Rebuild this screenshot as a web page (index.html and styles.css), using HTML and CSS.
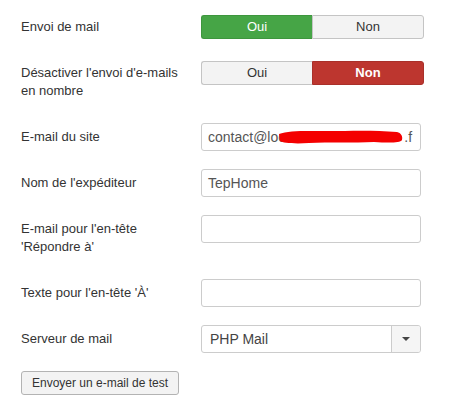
FILE: index.html
```html
<!DOCTYPE html>
<html lang="fr">
<head>
<meta charset="utf-8">
<link rel="stylesheet" href="styles.css">
</head>
<body>
<form class="form">
  <div class="row">
    <div class="label">Envoi de mail</div>
    <div class="controls">
      <div class="toggle">
        <span class="opt on-yes">Oui</span>
        <span class="opt">Non</span>
      </div>
    </div>
  </div>
  <div class="row">
    <div class="label">Désactiver l'envoi d'e-mails en nombre</div>
    <div class="controls">
      <div class="toggle">
        <span class="opt">Oui</span>
        <span class="opt on-no">Non</span>
      </div>
    </div>
  </div>
  <div class="row">
    <div class="label">E-mail du site</div>
    <div class="controls">
      <div class="input">
        <span class="val">contact@loc<svg class="scribble" width="124" height="16" viewBox="0 0 124 16"><path d="M0 5 C 10 1, 30 2, 50 2 C 70 2, 95 1, 118 3 C 122 4, 124 7, 123 11 C 121 14, 110 14, 95 13 C 75 14, 50 13, 30 14 C 15 15, 4 14, 1 12 Z" fill="#f40000"/></svg>.f</span>
      </div>
    </div>
  </div>
  <div class="row">
    <div class="label">Nom de l'expéditeur</div>
    <div class="controls">
      <div class="input"><span class="val">TepHome</span></div>
    </div>
  </div>
  <div class="row">
    <div class="label">E-mail pour l'en-tête 'Répondre à'</div>
    <div class="controls">
      <div class="input"></div>
    </div>
  </div>
  <div class="row">
    <div class="label">Texte pour l'en-tête 'À'</div>
    <div class="controls">
      <div class="input"></div>
    </div>
  </div>
  <div class="row">
    <div class="label">Serveur de mail</div>
    <div class="controls">
      <div class="select">
        <span class="sel-val">PHP Mail</span>
        <span class="sel-caret"><span class="caret"></span></span>
      </div>
    </div>
  </div>
  <div class="actions">
    <span class="btn">Envoyer un e-mail de test</span>
  </div>
</form>
</body>
</html>
```

FILE: styles.css
```css
html, body {
  margin: 0;
  padding: 0;
  background: #fff;
}
body {
  font-family: "Liberation Sans", Arial, sans-serif;
  font-size: 13px;
  line-height: 18px;
  color: #333;
}
.form {
  padding: 13px 0 0 21px;
}
.row {
  display: flex;
  margin-bottom: 18px;
}
.label {
  width: 160px;
  margin-right: 20px;
  padding: 5px 0;
  line-height: 18px;
}
.controls {
  min-height: 28px;
}
.toggle {
  margin-top: 2px;
  display: flex;
  width: 223px;
  height: 24px;
  box-sizing: border-box;
}
.opt {
  flex: 1;
  display: flex;
  align-items: center;
  justify-content: center;
  background: #f3f3f3;
  border: 1px solid #c4c4c4;
  color: #333;
  box-sizing: border-box;
}
.opt:first-child {
  border-radius: 3px 0 0 3px;
  border-right: none;
}
.opt:last-child {
  border-radius: 0 3px 3px 0;
}
.opt.on-yes {
  background: #46a546;
  border-color: #3d963d;
  color: #fff;
}
.opt.on-no {
  background: #bd362f;
  border-color: #a9302a;
  color: #fff;
  font-weight: bold;
}
.input {
  width: 220px;
  height: 28px;
  box-sizing: border-box;
  border: 1px solid #ccc;
  border-radius: 3px;
  background: #fff;
  padding: 0 6px;
  display: flex;
  align-items: center;
  overflow: hidden;
  color: #555;
  font-size: 14px;
}
.val {
  white-space: nowrap;
}
.scribble {
  vertical-align: -3px;
  margin-left: -6px;
  margin-right: 1px;
}
.select {
  width: 220px;
  height: 28px;
  box-sizing: border-box;
  border: 1px solid #ccc;
  border-radius: 3px;
  display: flex;
  overflow: hidden;
  color: #444;
  font-size: 14px;
}
.sel-val {
  flex: 1;
  display: flex;
  align-items: center;
  padding-left: 8px;
}
.sel-caret {
  width: 28px;
  border-left: 1px solid #ccc;
  background: #f5f5f5;
  display: flex;
  align-items: center;
  justify-content: center;
}
.caret {
  width: 0;
  height: 0;
  border-left: 4px solid transparent;
  border-right: 4px solid transparent;
  border-top: 4px solid #444;
}
.actions {
  display: flex;
}
.btn {
  display: flex;
  align-items: center;
  justify-content: center;
  width: 158px;
  height: 24px;
  box-sizing: border-box;
  background: #f3f3f3;
  border: 1px solid #b3b3b3;
  border-radius: 3px;
  color: #333;
  font-size: 12px;
}
```
